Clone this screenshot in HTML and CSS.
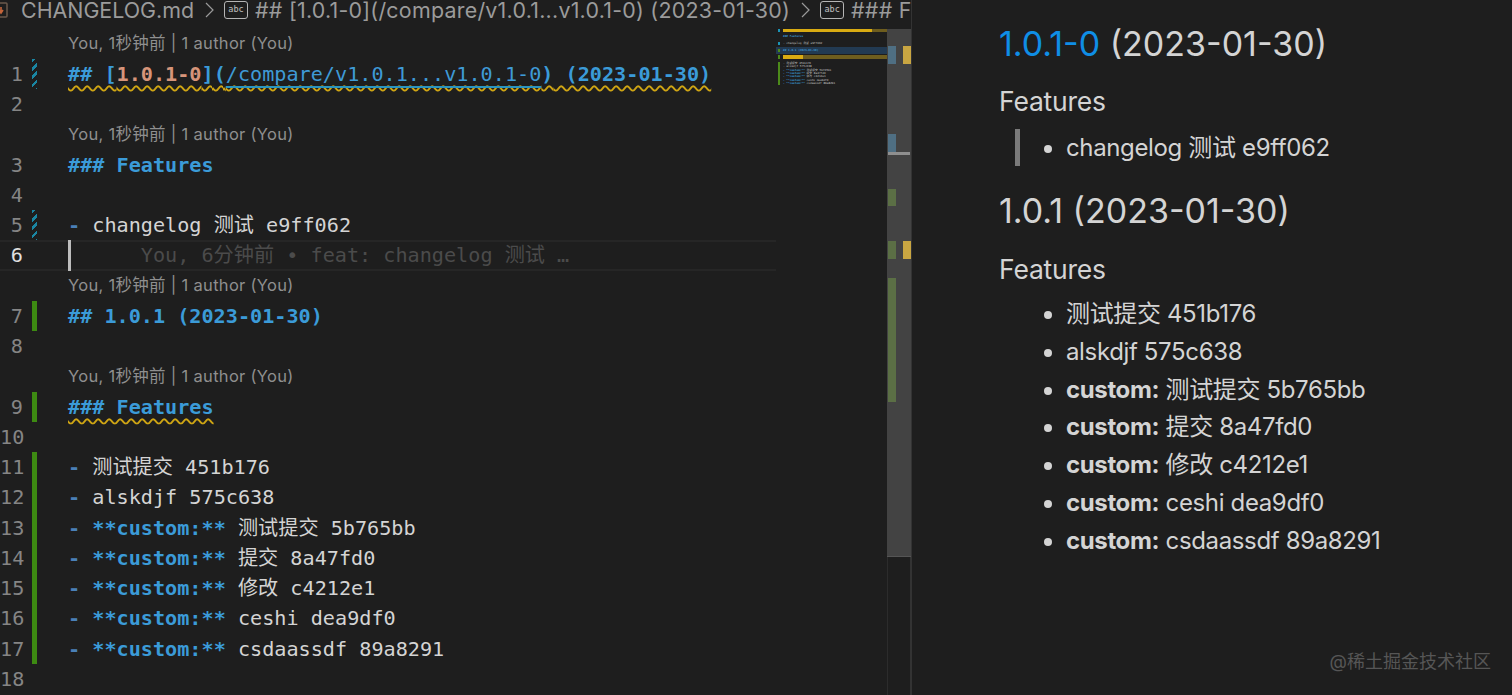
FILE: index.html
```html
<!DOCTYPE html>
<html lang="zh">
<head>
<meta charset="utf-8">
<title>CHANGELOG.md</title>
<link rel="stylesheet" href="styles.css">
</head>
<body>
<div class="app">
  <section class="editor">
    <nav class="crumbs">
      <svg class="file-icon" width="9" height="18" viewBox="0 0 9 18"><rect x="-6" y="2" width="13" height="14" rx="1" fill="none" stroke="#6b5a4c" stroke-width="1.5"/><path d="M1 6v5M-1 9l2 3 2-3" fill="none" stroke="#c5653a" stroke-width="1.6"/></svg>
      <span class="crumb first">CHANGELOG.md</span>
      <svg class="chev" width="9" height="16" viewBox="0 0 9 16"><path d="M1 1l7 7-7 7" fill="none" stroke="#9a9a9a" stroke-width="1.2"/></svg>
      <span class="abc">abc</span>
      <span class="crumb wide">## [1.0.1-0](/compare/v1.0.1...v1.0.1-0) (2023-01-30)</span>
      <svg class="chev" width="9" height="16" viewBox="0 0 9 16"><path d="M1 1l7 7-7 7" fill="none" stroke="#9a9a9a" stroke-width="1.2"/></svg>
      <span class="abc">abc</span>
      <span class="crumb wide">### Features</span>
    </nav>
    <div class="body">
      <div class="code">
        <div class="row"><span class="ln"></span><span class="mk"></span><span class="lens">You, 1秒钟前 | 1 author (You)</span></div>
        <div class="row"><span class="ln">1</span><span class="mk hatch"></span><span class="txt h wavy"><span class="bl">## [</span><span class="sal">1.0.1-0</span><span class="bl">](</span><span class="reg link">/compare/v1.0.1...v1.0.1-0</span><span class="bl">)</span><span class="bl"> (2023-01-30)</span></span></div>
        <div class="row"><span class="ln">2</span><span class="mk"></span></div>
        <div class="row"><span class="ln"></span><span class="mk"></span><span class="lens">You, 1秒钟前 | 1 author (You)</span></div>
        <div class="row"><span class="ln">3</span><span class="mk"></span><span class="txt h bl">### Features</span></div>
        <div class="row"><span class="ln">4</span><span class="mk"></span></div>
        <div class="row"><span class="ln">5</span><span class="mk hatch"></span><span class="txt"><span class="dash">-</span> changelog 测试 e9ff062</span></div>
        <div class="row current"><span class="ln on">6</span><span class="mk"></span><span class="cursor"></span><span class="txt ghost">      You, 6分钟前 • feat: changelog 测试 …</span></div>
        <div class="row"><span class="ln"></span><span class="mk"></span><span class="lens">You, 1秒钟前 | 1 author (You)</span></div>
        <div class="row"><span class="ln">7</span><span class="mk add"></span><span class="txt h bl">## 1.0.1 (2023-01-30)</span></div>
        <div class="row"><span class="ln">8</span><span class="mk"></span></div>
        <div class="row"><span class="ln"></span><span class="mk"></span><span class="lens">You, 1秒钟前 | 1 author (You)</span></div>
        <div class="row"><span class="ln">9</span><span class="mk add"></span><span class="txt h bl wavy">### Features</span></div>
        <div class="row"><span class="ln">10</span><span class="mk"></span></div>
        <div class="row"><span class="ln">11</span><span class="mk add"></span><span class="txt"><span class="dash">-</span> 测试提交 451b176</span></div>
        <div class="row"><span class="ln">12</span><span class="mk add"></span><span class="txt"><span class="dash">-</span> alskdjf 575c638</span></div>
        <div class="row"><span class="ln">13</span><span class="mk add"></span><span class="txt"><span class="dash">-</span> <b class="bl">**custom:**</b> 测试提交 5b765bb</span></div>
        <div class="row"><span class="ln">14</span><span class="mk add"></span><span class="txt"><span class="dash">-</span> <b class="bl">**custom:**</b> 提交 8a47fd0</span></div>
        <div class="row"><span class="ln">15</span><span class="mk add"></span><span class="txt"><span class="dash">-</span> <b class="bl">**custom:**</b> 修改 c4212e1</span></div>
        <div class="row"><span class="ln">16</span><span class="mk add"></span><span class="txt"><span class="dash">-</span> <b class="bl">**custom:**</b> ceshi dea9df0</span></div>
        <div class="row"><span class="ln">17</span><span class="mk add"></span><span class="txt"><span class="dash">-</span> <b class="bl">**custom:**</b> csdaassdf 89a8291</span></div>
        <div class="row"><span class="ln">18</span><span class="mk"></span></div>
      </div>
      <aside class="minimap">
        <div class="mm-row warn"><i class="mm-t"></i><span class="sq wide"></span></div>
        <div class="mm-row"><i></i></div>
        <div class="mm-row"><i></i><span class="bl">### Features</span></div>
        <div class="mm-row"><i></i></div>
        <div class="mm-row"><i class="mm-t"></i><span>- changelog 测试 e9ff062</span></div>
        <div class="mm-row"><i></i></div>
        <div class="mm-row sel"><i class="mm-g"></i><span class="bl">## 1.0.1 (2023-01-30)</span></div>
        <div class="mm-row"><i></i></div>
        <div class="mm-row warn"><i class="mm-g"></i><span class="sq narrow"></span></div>
        <div class="mm-row"><i></i></div>
        <div class="mm-row"><i class="mm-g"></i><span>- 测试提交 451b176</span></div>
        <div class="mm-row"><i class="mm-g"></i><span>- alskdjf 575c638</span></div>
        <div class="mm-row"><i class="mm-g"></i><span><b class="bl">- **custom:**</b> 测试提交 5b765bb</span></div>
        <div class="mm-row"><i class="mm-g"></i><span><b class="bl">- **custom:**</b> 提交 8a47fd0</span></div>
        <div class="mm-row"><i class="mm-g"></i><span><b class="bl">- **custom:**</b> 修改 c4212e1</span></div>
        <div class="mm-row"><i class="mm-g"></i><span><b class="bl">- **custom:**</b> ceshi dea9df0</span></div>
        <div class="mm-row"><i class="mm-g"></i><span><b class="bl">- **custom:**</b> csdaassdf 89a8291</span></div>
      </aside>
      <div class="scroll-col">
        <div class="scroll">
          <div class="mark lane-l m1"></div>
          <div class="mark lane-r m2"></div>
          <div class="mark lane-l m3"></div>
          <div class="curline"></div>
          <div class="mark lane-l m4"></div>
          <div class="mark lane-l m5"></div>
          <div class="mark lane-r m6"></div>
          <div class="mark lane-l m7"></div>
        </div>
      </div>
    </div>
  </section>
  <main class="preview">
    <h1 class="title"><a class="plink">1.0.1-0</a> (2023-01-30)</h1>
    <h2 class="sub">Features</h2>
    <blockquote class="quote">
      <ul class="list inner"><li>changelog 测试 e9ff062</li></ul>
    </blockquote>
    <h1 class="title second">1.0.1 (2023-01-30)</h1>
    <h2 class="sub">Features</h2>
    <ul class="list outer">
      <li>测试提交 451b176</li>
      <li>alskdjf 575c638</li>
      <li><b>custom:</b> 测试提交 5b765bb</li>
      <li><b>custom:</b> 提交 8a47fd0</li>
      <li><b>custom:</b> 修改 c4212e1</li>
      <li><b>custom:</b> ceshi dea9df0</li>
      <li><b>custom:</b> csdaassdf 89a8291</li>
    </ul>
    <div class="watermark">@稀土掘金技术社区</div>
  </main>
</div>
</body>
</html>
```
FILE: styles.css
```css
* { box-sizing: border-box; }
html, body { margin: 0; height: 100%; background: #1e1e1e; overflow: hidden; }
.app { display: flex; height: 695px; overflow: hidden; }

.editor { width: 912px; flex: none; display: flex; flex-direction: column; border-right: 1px solid #333333; }
.crumbs {
  height: 28.5px; flex: none; display: flex; align-items: flex-start; white-space: nowrap; overflow: hidden;
  font-family: Inter, "Noto Sans CJK SC", sans-serif; font-size: 21.4px; line-height: 21px; color: #9b9b9b;
}
.file-icon { flex: none; margin: 1px 12px 0 0; }
.crumb { flex: none; }
.crumb.wide { letter-spacing: 0.25px; }
.chev { flex: none; margin: 2px 10px 0 11px; }
.abc {
  flex: none; width: 24px; height: 18px; margin: 1px 7px 0 0; border: 1.5px solid #b5b5b5; border-radius: 3px;
  font: 8.5px/15px "DejaVu Sans Mono", monospace; text-align: center; color: #c0c0c0;
}

.body { flex: 1; display: flex; min-height: 0; }
.code {
  width: 776px; flex: none; overflow: hidden;
  font-family: "DejaVu Sans Mono", "Noto Sans CJK SC", monospace; font-size: 20.17px; color: #d4d4d4;
}
.row { height: 30.25px; display: flex; align-items: center; white-space: pre; }
.ln { width: 23px; flex: none; text-align: right; color: #858585; font-size: 20.17px; }
.ln.on { color: #e0e0e0; }
.mk { width: 5px; height: 100%; margin: 0 31px 0 9px; flex: none; }
.mk.add { background: #3d8a12; }
.mk.hatch { background: repeating-linear-gradient(135deg, #1a86a3 0 2.5px, #1e1e1e 2.5px 6px); }
.lens { font-family: Inter, "Noto Sans CJK SC", sans-serif; font-size: 16.5px; color: #8f8f8f; letter-spacing: 0.3px; padding-bottom: 3px; }
.txt { line-height: 30.25px; }
.h, .bl { color: #3b9bd8; font-weight: 700; }
.sal { color: #d7957a; font-weight: 700; }
.reg { color: #3f9ad6; font-weight: 400; }
.dash { color: #4a80b8; font-weight: 700; }
.wavy { text-decoration: underline wavy #cfa513 1.5px; text-underline-offset: 3.5px; }
.link { text-decoration: underline solid #2a95c0 1.5px; text-underline-offset: 5px; }
.current { border-top: 2px solid #262626; border-bottom: 2px solid #262626; position: relative; }
.cursor { position: absolute; left: 68px; top: -2px; bottom: -2px; width: 3px; background: #bdbdbd; }
.ghost { color: #4b4b4b; }

.minimap { width: 111px; flex: none; padding-left: 2px; font-family: "DejaVu Sans Mono", "Noto Sans CJK SC", monospace; font-size: 2.8px; color: #c5c5c5; overflow: hidden; }
.mm-row { height: 3.35px; display: flex; align-items: center; white-space: pre; line-height: 3.35px; }
.mm-row i { width: 2px; height: 100%; flex: none; margin-right: 3px; }
.mm-row .mm-t { background: #1b93b5; }
.mm-row .mm-g { background: #4c8a1a; }
.warn { background: linear-gradient(#6e5d1e, #6e5d1e) 5px 0 / 100% 100% no-repeat; }
.sq { height: 3.35px; background: #d9ab12; flex: none; }
.sq.wide { width: 89px; }
.sq.narrow { width: 20px; }
.sel { background: #223a52; box-shadow: 0 0 0 2px #223a52; }

.scroll-col { width: 24px; flex: none; border-left: 1px solid #2c2c2c; border-right: 1px solid #333333; }
.scroll { margin: 0 -1px; height: 528.5px; background: #434343; border-bottom: 1px solid #555555; position: relative; }
.mark { position: absolute; width: 8px; }
.lane-l { left: 1px; }
.lane-r { right: 0; background: #c9a642; }
.m1 { top: 17.5px; height: 18px; background: #4f6f83; }
.m2 { top: 17.5px; height: 18px; }
.m3 { top: 105.5px; height: 18px; background: #4f6f83; }
.curline { position: absolute; left: 1px; right: 1px; top: 123.5px; height: 3px; background: #8f8f8f; }
.m4 { top: 160.5px; height: 17px; background: #5b6f45; }
.m5 { top: 212.5px; height: 18px; background: #5b6f45; }
.m6 { top: 212.5px; height: 18px; }
.m7 { top: 249.5px; height: 124px; background: #5b6f45; }

.preview { flex: 1; position: relative; padding: 24px 0 0 87px; font-family: Inter, "Noto Sans CJK SC", sans-serif; color: #d4d4d4; }
.title { margin: 0; font-size: 34px; font-weight: 400; line-height: 40px; }
.title.second { margin-top: 25px; }
.plink { color: #0f8ee6; }
.sub { margin: 20px 0 0; font-size: 26.5px; font-weight: 400; line-height: 34px; letter-spacing: -0.2px; }
.title.second + .sub { margin-top: 21px; }
.quote { margin: 11px 0 0 16px; border-left: 5px solid #7a7a7a; height: 37px; }
.list { margin: 0; font-size: 24px; line-height: 37.75px; letter-spacing: -0.36px; }
.list.inner { padding-left: 46px; }
.list.outer { padding-left: 67px; margin-top: 9px; }
.list b { font-weight: 700; }
.watermark { position: absolute; right: 21px; bottom: 21px; font-size: 18px; line-height: 24px; color: #565656; }
```
